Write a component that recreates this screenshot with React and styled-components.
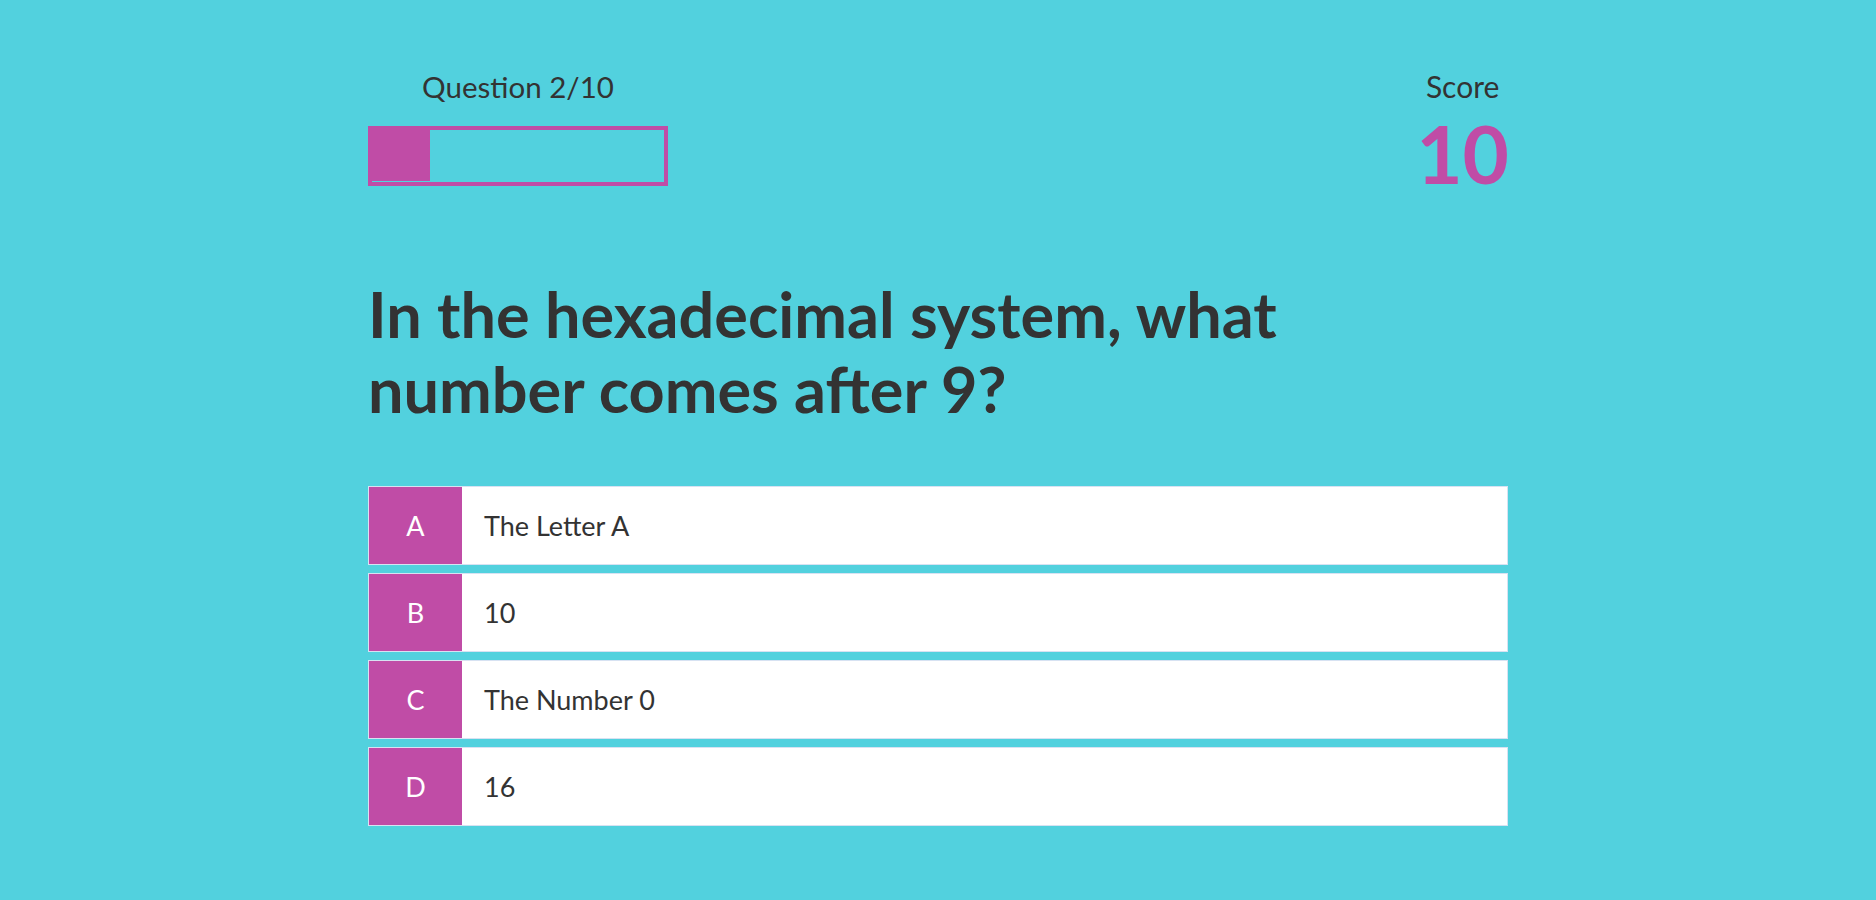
import React from "react";
import styled, { createGlobalStyle } from "styled-components";

const GlobalStyle = createGlobalStyle`
  html, body {
    margin: 0;
    padding: 0;
    background: #52d1de;
  }
  body {
    font-family: Lato, "Open Sans", sans-serif;
    color: #333333;
  }
`;

const answers = [
  { letter: "A", text: "The Letter A" },
  { letter: "B", text: "10" },
  { letter: "C", text: "The Number 0" },
  { letter: "D", text: "16" },
];

const questionNo = 2;
const total = 10;

class App extends React.Component {
  render() {
    let progress = (questionNo / total) * 100;
    return (
      <Page>
        <GlobalStyle />
        <Container>
          <Header>
            <ProgressBlock>
              <HeadTxt size={29.5}>Question {questionNo}/{total}</HeadTxt>
              <ProgressBar>
                <ProgressFill style={{ width: progress + "%" }} />
              </ProgressBar>
            </ProgressBlock>
            <ScoreBlock>
              <HeadTxt size={30}>Score</HeadTxt>
              <ScoreNum>10</ScoreNum>
            </ScoreBlock>
          </Header>

          <Question>In the hexadecimal system, what number comes after 9?</Question>

          <AnswerList>
            {answers.map((a) => (
              <Answer key={a.letter}>
                <Letter>{a.letter}</Letter>
                <AnswerTxt>{a.text}</AnswerTxt>
              </Answer>
            ))}
          </AnswerList>
        </Container>
      </Page>
    );
  }
}

const Page = styled.div`
  min-height: 100vh;
  background: #52d1de;
  box-sizing: border-box;
  padding-top: 69px;
`;

const Container = styled.div`
  width: 1140px;
  margin: 0 auto;
`;

const Header = styled.div`
  display: flex;
  justify-content: space-between;
  align-items: flex-start;
`;

const ProgressBlock = styled.div`
  width: 300px;
  display: flex;
  flex-direction: column;
  align-items: center;
`;

const HeadTxt = styled.div`
  font-size: ${(p) => p.size}px;
  height: 35px;
  line-height: 35px;
  font-weight: 400;
  color: #333333;
`;

const ProgressBar = styled.div`
  margin-top: 22px;
  width: 300px;
  height: 60px;
  box-sizing: border-box;
  border: 4px solid #c04ca6;
  padding-bottom: 1px;
  display: flex;
`;

const ProgressFill = styled.div`
  height: 100%;
  background: #c04ca6;
`;

const ScoreBlock = styled.div`
  display: flex;
  flex-direction: column;
  align-items: center;
  margin-right: -1px;
`;

const ScoreNum = styled.div`
  font-size: 80px;
  line-height: 98px;
  font-weight: 700;
  color: #c04ca6;
`;

const Question = styled.h1`
  margin: 74px 0 0 0;
  max-width: 1000px;
  font-size: 63px;
  line-height: 75px;
  font-weight: 700;
  color: #333333;
`;

const AnswerList = styled.div`
  margin-top: 60px;
  display: flex;
  flex-direction: column;
  gap: 8px;
`;

const Answer = styled.div`
  display: flex;
  height: 79px;
  box-sizing: border-box;
  background: #ffffff;
  border: 1px solid #d7e2f2;
`;

const Letter = styled.div`
  width: 93px;
  flex: 0 0 93px;
  background: #c04ca6;
  color: #ffffff;
  font-size: 27px;
  display: flex;
  align-items: center;
  justify-content: center;
`;

const AnswerTxt = styled.div`
  flex: 1;
  padding-left: 22px;
  font-size: 27px;
  color: #333333;
  display: flex;
  align-items: center;
`;

export default App;
